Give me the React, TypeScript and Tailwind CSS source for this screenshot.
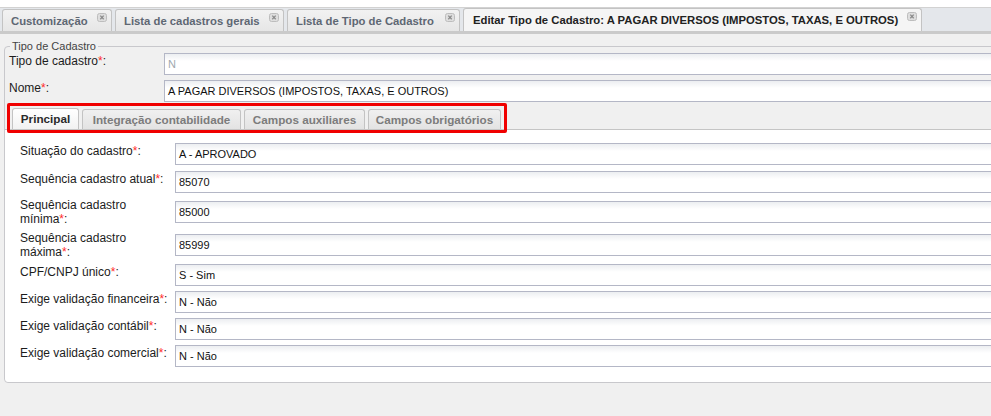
import React from 'react'

const topTabs = [
  { label: 'Customização', width: 'w-[110px]', active: false },
  { label: 'Lista de cadastros gerais', width: 'w-[169px]', active: false },
  { label: 'Lista de Tipo de Cadastro', width: 'w-[173px]', active: false },
  { label: 'Editar Tipo de Cadastro: A PAGAR DIVERSOS (IMPOSTOS, TAXAS, E OUTROS)', width: 'w-[459px]', active: true },
]

const innerTabs = [
  { label: 'Principal', width: 'w-[67px]', active: true },
  { label: 'Integração contabilidade', width: 'w-[159px]', active: false },
  { label: 'Campos auxiliares', width: 'w-[121px]', active: false },
  { label: 'Campos obrigatórios', width: 'w-[133px]', active: false },
]

const fields = [
  { label: ['Situação do cadastro'], value: 'A - APROVADO' },
  { label: ['Sequência cadastro atual'], value: '85070' },
  { label: ['Sequência cadastro', 'mínima'], value: '85000' },
  { label: ['Sequência cadastro', 'máxima'], value: '85999' },
  { label: ['CPF/CNPJ único'], value: 'S - Sim' },
  { label: ['Exige validação financeira'], value: 'N - Não' },
  { label: ['Exige validação contábil'], value: 'N - Não' },
  { label: ['Exige validação comercial'], value: 'N - Não' },
]

function CloseIcon() {
  return (
    <svg width="10" height="9" viewBox="0 0 10 9" className="shrink-0">
      <rect x="0.5" y="0.5" width="9" height="8" rx="2" fill="#dedede" stroke="#bdbdbd" />
      <path d="M3.3 2.6 L6.7 6.2 M6.7 2.6 L3.3 6.2" stroke="#8c8c8c" strokeWidth="1.3" />
    </svg>
  )
}

function Req() {
  return <span className="text-[#ff2b2b]">*</span>
}

function Input({ value, disabled }: { value: string; disabled?: boolean }) {
  return (
    <div
      className={`flex-1 min-w-0 h-[22px] border border-[#b4b7c6] bg-[linear-gradient(to_bottom,#eceef1,#ffffff_7px)] px-[3px] flex items-center text-[11px] whitespace-nowrap ${
        disabled ? 'text-[#a0a8ae]' : 'text-[#111]'
      }`}
    >
      {value}
    </div>
  )
}

export default function App() {
  return (
    <div className="w-[991px] h-[416px] overflow-hidden bg-[#f0f0f0] font-['Liberation_Sans',Arial,sans-serif] text-[12px] text-[#1c1c1c]">
      {/* top strip */}
      <div className="h-[8px] bg-white border-b border-[#d2d2d2]" />

      {/* main tabs */}
      <div className="h-[26px] bg-[#e4e7eb] border-b-[3px] border-[#cacaca] flex items-end gap-[3px] pl-[2px]">
        {topTabs.map((t) => (
          <div
            key={t.label}
            className={`${t.width} shrink-0 flex items-center rounded-t-[3px] border border-b-0 border-[#c3c3c3] pl-[8px] pr-[4px] pt-[1px] font-bold text-[11.3px] whitespace-nowrap ${
              t.active
                ? 'h-[23px] bg-[#f5f5f5] text-[#222] pl-[9px]'
                : 'h-[22px] bg-[linear-gradient(to_bottom,#f2f2f2,#e6e6e6)] text-[#5e6773]'
            }`}
          >
            <span>{t.label}</span>
            <span className="ml-auto self-start mt-[2px]">
              <CloseIcon />
            </span>
          </div>
        ))}
      </div>

      {/* fieldset */}
      <fieldset className="mt-[5px] ml-[4px] mr-[-20px] border border-[#c8c8cc] rounded-[4px]">
        <legend className="ml-[5px] px-[2px] text-[11px] leading-[14px] text-[#444]">Tipo de Cadastro</legend>

        <div className="pl-[4px] flex flex-col gap-[5px]">
          <div className="flex items-start">
            <div className="w-[155px] shrink-0 pt-[1px] leading-[14px]">
              Tipo de cadastro<Req />:
            </div>
            <Input value="N" disabled />
          </div>
          <div className="flex items-start">
            <div className="w-[155px] shrink-0 pt-[1px] leading-[14px]">
              Nome<Req />:
            </div>
            <Input value="A PAGAR DIVERSOS (IMPOSTOS, TAXAS, E OUTROS)" />
          </div>
        </div>

        {/* inner tab strip */}
        <div className="relative h-[27px] border-b border-[#c5c5c5] flex items-end gap-[3px] pl-[7px] mt-[1px]">
          {innerTabs.map((t) => (
            <div
              key={t.label}
              className={`${t.width} shrink-0 flex items-center justify-center rounded-t-[3px] border border-b-0 border-[#c3c3c3] font-bold text-[11.7px] whitespace-nowrap ${
                t.active
                  ? 'h-[21px] bg-[linear-gradient(to_bottom,#ffffff,#f2f2f2)] text-[#2a2a2a]'
                  : 'h-[20px] bg-[linear-gradient(to_bottom,#f0f0f0,#e3e3e3)] text-[#7c7c7c]'
              }`}
            >
              {t.label}
            </div>
          ))}
          <div className="absolute left-[2px] top-0 w-[500px] h-[30px] border-[3px] border-[#f00000] rounded-[2px] pointer-events-none" />
        </div>

        {/* panel */}
        <div className="bg-white pl-[15px] pt-[13px] pb-[15px] flex flex-col gap-[5px] rounded-b-[4px]">
          {fields.map((f, i) => {
            const multi = f.label.length > 1
            return (
              <div
                key={i}
                className={`flex ${multi ? 'items-center' : 'items-start'} ${i === 0 ? 'mb-[1px]' : ''}`}
              >
                <div className={`w-[155px] shrink-0 leading-[14px] ${multi ? '' : 'pt-[1px]'}`}>
                  {f.label.map((l, j) => (
                    <div key={j}>
                      {l}
                      {j === f.label.length - 1 && (
                        <>
                          <Req />:
                        </>
                      )}
                    </div>
                  ))}
                </div>
                <Input value={f.value} />
              </div>
            )
          })}
        </div>
      </fieldset>
    </div>
  )
}
